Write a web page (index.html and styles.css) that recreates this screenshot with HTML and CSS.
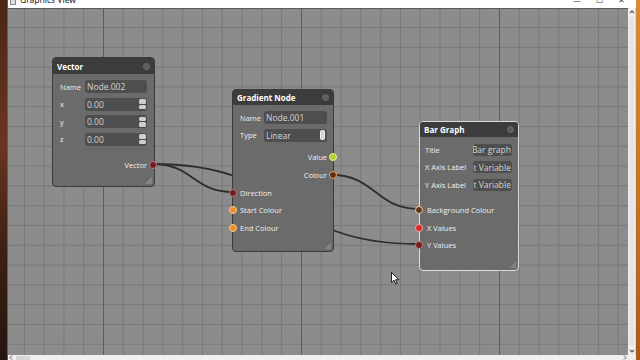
FILE: index.html
```html
<!DOCTYPE html>
<html>
<head>
<meta charset="utf-8">
<link rel="stylesheet" href="styles.css">
</head>
<body>
<div class="desk-left"></div>
<div class="window">
  <div class="titlebar">
    <div class="tb-left"><span class="app-icon"></span><span class="tb-title">Graphics View</span></div>
    <div class="tb-controls"><span class="tb-min">—</span><span class="tb-max">☐</span><span class="tb-close">✕</span></div>
  </div>
  <div class="main">
    <div class="canvas">
      <svg class="wires" width="620" height="347" viewBox="0 0 620 347">
        <path d="M145,156 C185,156 185,184 225,184" />
        <path d="M145,156 C290,156 266,236 411,236" />
        <path d="M324,167 C367,167 368,201 411,201" />
      </svg>

      <div class="node node-vector">
        <div class="node-head"><span>Vector</span><span class="close"></span></div>
        <div class="node-body">
          <div class="prop"><span class="lbl">Name</span><span class="field">Node.002</span></div>
          <div class="prop"><span class="lbl">x</span><span class="field">0.00<span class="spin"><i></i><i></i></span></span></div>
          <div class="prop"><span class="lbl">y</span><span class="field">0.00<span class="spin"><i></i><i></i></span></span></div>
          <div class="prop"><span class="lbl">z</span><span class="field">0.00<span class="spin"><i></i><i></i></span></span></div>
          <div class="ports vec-ports">
            <div class="port out">Vector<span class="dot p-darkred"></span></div>
          </div>
        </div>
        <span class="grip"></span>
      </div>

      <div class="node node-gradient">
        <div class="node-head"><span>Gradient Node</span><span class="close"></span></div>
        <div class="node-body">
          <div class="prop"><span class="lbl">Name</span><span class="field">Node.001</span></div>
          <div class="prop"><span class="lbl">Type</span><span class="field">Linear<span class="combo"></span></span></div>
          <div class="ports grad-ports">
            <div class="port out">Value<span class="dot p-lime"></span></div>
            <div class="port out">Colour<span class="dot p-brown"></span></div>
            <div class="port in"><span class="dot p-darkred"></span>Direction</div>
            <div class="port in"><span class="dot p-orange"></span>Start Colour</div>
            <div class="port in"><span class="dot p-orange"></span>End Colour</div>
          </div>
        </div>
        <span class="grip"></span>
      </div>

      <div class="node node-bar">
        <div class="node-head"><span>Bar Graph</span><span class="close"></span></div>
        <div class="node-body">
          <div class="prop"><span class="lbl">Title</span><span class="field clip"><span>Bar graph</span></span></div>
          <div class="prop"><span class="lbl">X Axis Label</span><span class="field clip"><span>Input Variable</span></span></div>
          <div class="prop"><span class="lbl">Y Axis Label</span><span class="field clip"><span>Input Variable</span></span></div>
          <div class="ports bar-ports">
            <div class="port in"><span class="dot p-beige"></span>Background Colour</div>
            <div class="port in"><span class="dot p-red"></span>X Values</div>
            <div class="port in"><span class="dot p-darkred"></span>Y Values</div>
          </div>
        </div>
        <span class="grip"></span>
      </div>

      <svg class="cursor" width="9" height="13" viewBox="0 0 9 13">
        <path d="M0.5,0.5 L0.5,10.5 L3,8.2 L4.8,12 L6.2,11.3 L4.5,7.7 L7.8,7.7 Z" />
      </svg>
    </div>
    <div class="vscroll">
      <svg class="arrow" width="8" height="8" viewBox="0 0 8 8"><path d="M2,5 L4,3 L6,5" /></svg>
      <div class="vtrack"></div>
      <svg class="arrow" width="8" height="8" viewBox="0 0 8 8"><path d="M2,3 L4,5 L6,3" /></svg>
    </div>
  </div>
  <div class="hscroll">
    <svg class="harrow" width="6" height="5" viewBox="0 0 6 5"><path d="M4,0.5 L2,2.5 L4,4.5" /></svg>
    <div class="hthumb"></div>
    <div class="htrack"></div>
    <svg class="harrow" width="6" height="5" viewBox="0 0 6 5"><path d="M2,0.5 L4,2.5 L2,4.5" /></svg>
  </div>
</div>
<div class="desk-right"></div>
</body>
</html>
```

FILE: styles.css
```css
* { box-sizing: border-box; }
html, body { margin: 0; padding: 0; }
body {
  width: 640px;
  height: 360px;
  overflow: hidden;
  display: flex;
  font-family: "Open Sans", "Noto Sans", sans-serif;
  background: #2a1a10;
}
.desk-left {
  width: 7px;
  background: linear-gradient(to bottom, #4a2616 0%, #6a3520 40%, #3c2014 70%, #24160e 100%);
}
.desk-right {
  width: 4px;
  background: linear-gradient(to bottom, #d98a36, #c46f24 60%, #a85a1c);
}
.window {
  flex: 1;
  display: flex;
  flex-direction: column;
  border-left: 1px solid #5c5c5c;
  background: #f0f0f0;
}
.titlebar {
  height: 8px;
  overflow: hidden;
  background: #ffffff;
  display: flex;
  justify-content: space-between;
  color: #333;
}
.tb-left {
  display: flex;
  align-items: center;
  margin-top: -7px;
  height: 14px;
  padding-left: 2px;
  gap: 4px;
}
.app-icon {
  width: 6px;
  height: 6px;
  border: 1px solid #888;
  background: #ddd;
  margin-top: 3px;
}
.tb-title {
  font-family: "Noto Sans", sans-serif;
  font-size: 8.5px;
  line-height: 14px;
  color: #222;
}
.tb-controls {
  display: flex;
  margin-top: -8px;
  height: 14px;
  align-items: center;
  font-size: 8px;
  color: #444;
}
.tb-controls span { display: block; text-align: center; width: 22px; }
.tb-close { margin-right: 4px; }

.main {
  flex: 1;
  display: flex;
  min-height: 0;
}
.canvas {
  position: relative;
  width: 620px;
  height: 347px;
  overflow: hidden;
  border-top: 1px solid #5a5a5a;
  background-color: #8c8c8c;
  background-image:
    linear-gradient(to right, #5d5d5d 1px, transparent 1px),
    linear-gradient(to right, #787878 1px, transparent 1px),
    linear-gradient(to bottom, #787878 1px, transparent 1px);
  background-size: 198px 100%, 19.8px 100%, 100% 19.8px;
  background-position: 95px 0, 15.8px 0, 0 18px;
}
.wires {
  position: absolute;
  left: 0;
  top: -1px;
}
.wires path {
  fill: none;
  stroke: #2e2e2e;
  stroke-width: 1.8;
}

.node {
  position: absolute;
  display: flex;
  flex-direction: column;
  background: #6b6b6b;
  border: 1px solid #3a3a3a;
  border-radius: 4px;
  color: #f2f2f2;
}
.node-vector { left: 44px; top: 48px; width: 103px; height: 130px; }
.node-gradient { left: 224px; top: 80px; width: 102px; height: 163px; }
.node-bar { left: 411px; top: 112px; width: 100px; height: 150px; border-color: #dcdcdc; }

.node-head {
  height: 16px;
  flex: none;
  display: flex;
  align-items: center;
  justify-content: space-between;
  padding: 0 4px 0 4px;
  background: #3c3c3c;
  border-radius: 3px 3px 0 0;
  font-weight: bold;
  font-size: 8px;
  color: #ffffff;
}
.node-gradient .node-head { height: 15px; }
.node-bar .node-head { height: 15px; }
.close {
  width: 7px;
  height: 7px;
  border-radius: 50%;
  background: #5e5e5e;
  border: 1px solid #6c6c6c;
}
.node-body {
  display: flex;
  flex-direction: column;
  padding: 6px 7px 0 7px;
  gap: 4.5px;
}
.node-gradient .node-body { padding: 6px 6px 0 7px; gap: 4.7px; }
.node-bar .node-body { padding: 6.5px 5px 0 5px; gap: 5.5px; }

.prop {
  display: flex;
  align-items: center;
  height: 13px;
}
.node-bar .prop { height: 12px; }
.lbl {
  width: 25px;
  font-size: 7.5px;
  white-space: nowrap;
  color: #f0f0f0;
}
.node-gradient .lbl { width: 24px; }
.node-bar .lbl { width: 48px; }
.field {
  position: relative;
  width: 62px;
  height: 100%;
  display: flex;
  align-items: center;
  padding-left: 2px;
  background: #4e4e4e;
  border-radius: 3px;
  font-size: 8.5px;
  color: #d4d4d4;
  white-space: nowrap;
}
.node-gradient .field { width: 62.5px; }
.node-bar .field { width: 39px; font-size: 8.5px; }
.field.clip {
  overflow: hidden;
  justify-content: flex-end;
  padding: 0 1px 0 0;
}
.field.clip span { flex: none; }
.spin {
  position: absolute;
  right: 1px;
  top: 1.5px;
  display: flex;
  flex-direction: column;
  gap: 1px;
}
.spin i {
  display: block;
  width: 7px;
  height: 4.5px;
  border-radius: 1.5px;
  background: #cfcfcf;
}
.combo {
  position: absolute;
  right: 2px;
  top: 1.5px;
  width: 5px;
  height: 10px;
  border-radius: 1.5px;
  background: #d4d4d4;
  border: 1px solid #eeeeee;
}

.ports {
  display: flex;
  flex-direction: column;
}
.vec-ports { margin-top: 6.5px; }
.grad-ports { margin-top: 2px; }
.bar-ports { margin-top: 5px; padding-left: 2px; }
.port {
  position: relative;
  height: 17.7px;
  display: flex;
  align-items: center;
  font-size: 7.5px;
  color: #f0f0f0;
  white-space: nowrap;
}
.port.out { justify-content: flex-end; }
.dot {
  position: absolute;
  top: 50%;
  width: 8px;
  height: 8px;
  margin-top: -4px;
  border-radius: 50%;
  border: 1.3px solid #ccc;
}
.out .dot { right: -10px; }
.node-gradient .out .dot { right: -9.7px; }
.in .dot { left: -11px; }
.node-bar .in .dot { left: -11.8px; }
.node-gradient .in .dot { left: -11.5px; }

.p-darkred { background: #6e1f22; border-color: #c27a7a; }
.p-red { background: #d8262a; border-color: #f2a0a0; }
.p-lime { background: #b4d030; border-color: #e6f59a; }
.p-brown { background: #5e3216; border-color: #e2a469; }
.p-orange { background: #ee8e2a; border-color: #f9c98e; }
.p-beige { background: #5c3418; border-color: #ecd0b0; }

.grip {
  position: absolute;
  right: 2px;
  bottom: 2px;
  width: 7px;
  height: 7px;
  background: linear-gradient(135deg, transparent 50%, #8a8a8a 50%);
  opacity: 0.8;
}

.cursor {
  position: absolute;
  left: 383px;
  top: 263px;
}
.cursor path {
  fill: #ffffff;
  stroke: #111;
  stroke-width: 0.9;
}

.vscroll {
  width: 8px;
  display: flex;
  flex-direction: column;
  background: #f0f0f0;
  border-right: 1px solid #d8d8d8;
}
.vscroll .arrow { flex: none; }
.vscroll .arrow path { fill: none; stroke: #555; stroke-width: 1.1; }
.vtrack {
  flex: 1;
  margin: 1px 1px;
  background: #e4e4e4;
}
.hscroll {
  height: 5px;
  display: flex;
  align-items: center;
  background: #f0f0f0;
  padding-right: 8px;
}
.harrow { flex: none; }
.harrow path { fill: none; stroke: #555; stroke-width: 1; }
.hthumb {
  width: 14px;
  height: 4px;
  margin-left: 2px;
  background: #d6d6d6;
}
.htrack { flex: 1; }
```
